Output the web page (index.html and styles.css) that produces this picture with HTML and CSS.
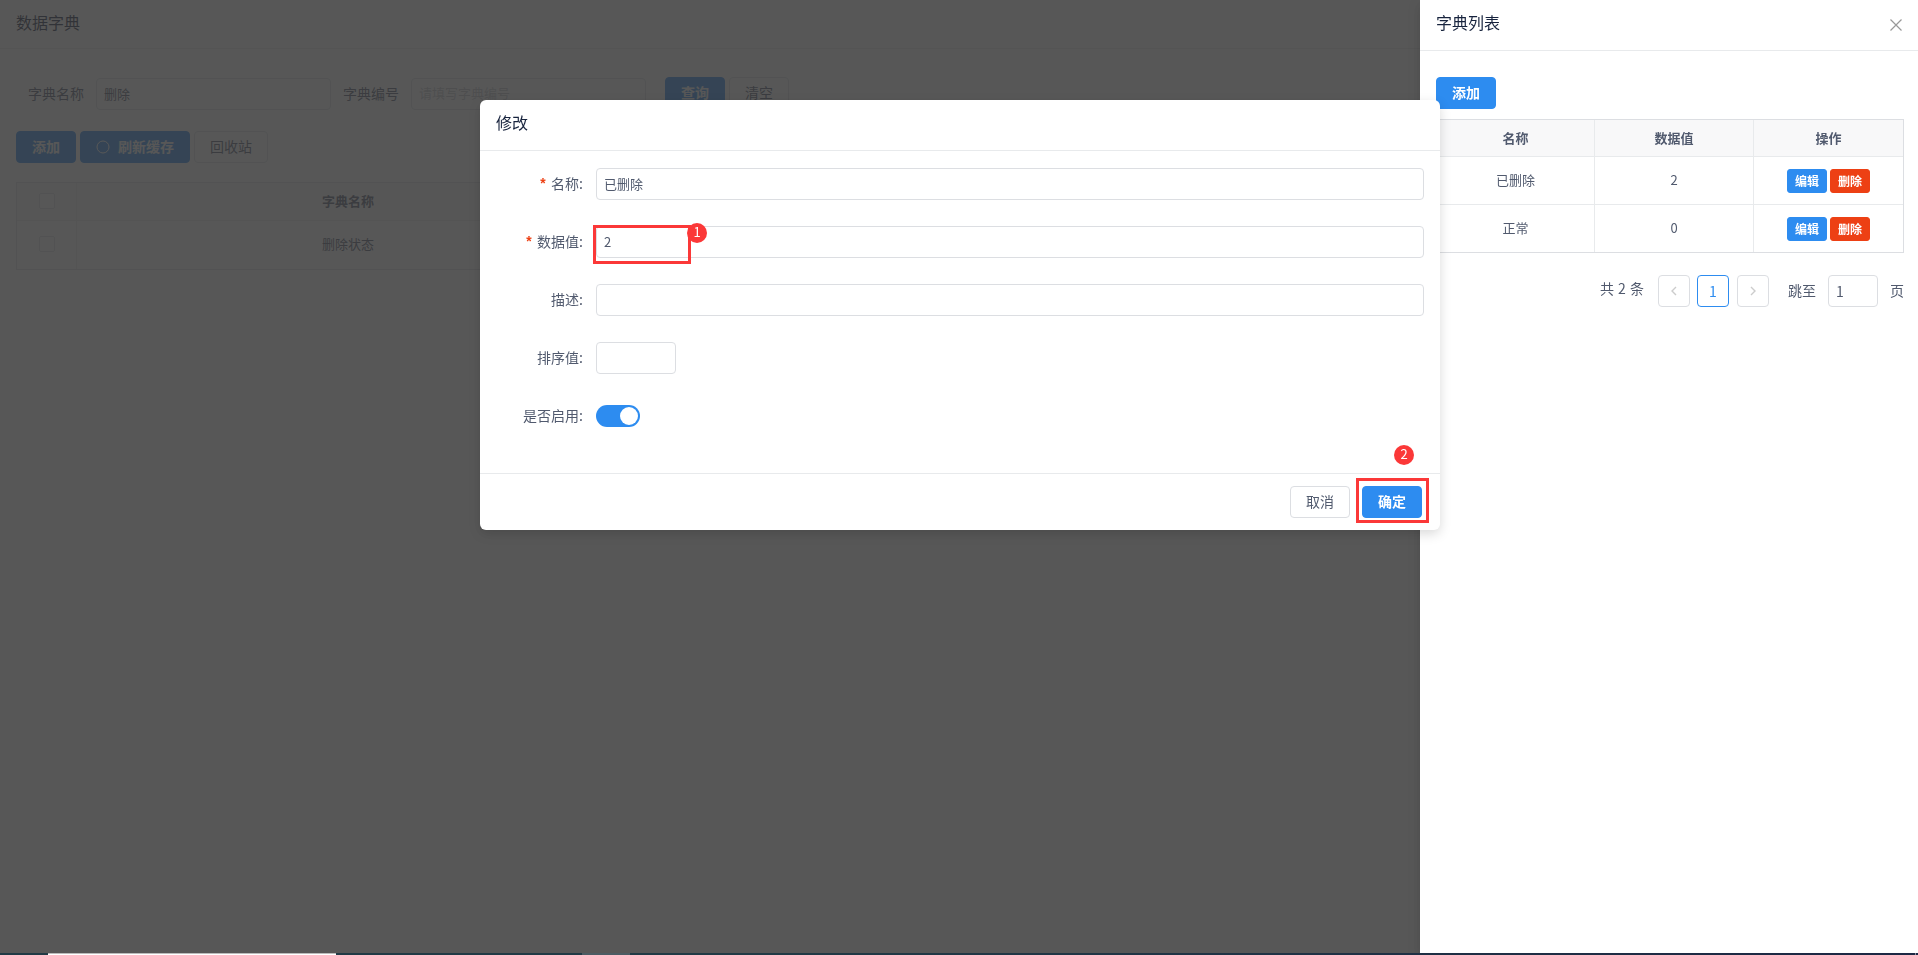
FILE: index.html
```html
<!DOCTYPE html>
<html lang="zh-CN">
<head>
<meta charset="utf-8">
<title>数据字典</title>
<link rel="stylesheet" href="styles.css">
</head>
<body>
<main class="page">
  <h1 class="page-title">数据字典</h1>
  <form class="search">
    <label class="search-label">字典名称</label>
    <div class="field search-field">删除</div>
    <label class="search-label">字典编号</label>
    <div class="field search-field placeholder">请填写字典编号</div>
    <div class="search-actions">
      <button type="button" class="btn primary">查询</button>
      <button type="button" class="btn">清空</button>
    </div>
  </form>
  <div class="toolbar">
    <button type="button" class="btn primary">添加</button>
    <button type="button" class="btn primary with-icon"><svg class="ring" width="14" height="14" viewBox="0 0 14 14"><circle cx="7" cy="7" r="6" fill="none" stroke="currentColor"/></svg><span>刷新缓存</span></button>
    <button type="button" class="btn">回收站</button>
  </div>
  <div class="dict-table">
    <div class="dict-row dict-head"><div class="dict-check"><i class="box"></i></div><div class="dict-name">字典名称</div><div></div></div>
    <div class="dict-row"><div class="dict-check"><i class="box"></i></div><div class="dict-name">删除状态</div><div></div></div>
  </div>
</main>
<div class="mask"></div>
<div class="mask"></div>

<aside class="drawer">
  <header class="panel-head drawer-head">
    <span>字典列表</span>
    <svg class="close" width="14" height="14" viewBox="0 0 14 14"><path d="M1.5 1.5 12.5 12.5M12.5 1.5 1.5 12.5" stroke="#999" stroke-width="1.2" fill="none"/></svg>
  </header>
  <div class="drawer-body">
    <button type="button" class="btn primary">添加</button>
    <div class="value-table">
      <div class="value-row value-head"><div>名称</div><div>数据值</div><div>操作</div></div>
      <div class="value-row"><div>已删除</div><div>2</div><div class="ops"><button type="button" class="btn small primary">编辑</button><button type="button" class="btn small danger">删除</button></div></div>
      <div class="value-row"><div>正常</div><div>0</div><div class="ops"><button type="button" class="btn small primary">编辑</button><button type="button" class="btn small danger">删除</button></div></div>
    </div>
    <nav class="pager">
      <span class="total">共 2 条</span>
      <span class="pager-item"><svg width="8" height="10" viewBox="0 0 8 10"><path d="M6 1 2 5 6 9" stroke="#ccc" stroke-width="1.4" fill="none"/></svg></span>
      <span class="pager-item active">1</span>
      <span class="pager-item next"><svg width="8" height="10" viewBox="0 0 8 10"><path d="M2 1 6 5 2 9" stroke="#ccc" stroke-width="1.4" fill="none"/></svg></span>
      <span class="jump">跳至</span>
      <div class="field jump-field">1</div>
      <span>页</span>
    </nav>
  </div>
</aside>

<section class="modal">
  <header class="panel-head modal-head">修改</header>
  <div class="modal-body">
    <div class="form-item"><label class="form-label required">名称:</label><div class="field grow">已删除</div></div>
    <div class="form-item"><label class="form-label required">数据值:</label><div class="field grow">2</div>
      <i class="mark mark-value"></i><b class="badge badge-value">1</b></div>
    <div class="form-item"><label class="form-label">描述:</label><div class="field grow"></div></div>
    <div class="form-item"><label class="form-label">排序值:</label><div class="field sort"></div></div>
    <div class="form-item"><label class="form-label">是否启用:</label><span class="switch"></span></div>
  </div>
  <footer class="modal-foot">
    <button type="button" class="btn">取消</button>
    <button type="button" class="btn primary">确定</button>
    <i class="mark mark-ok"></i><b class="badge badge-ok">2</b>
  </footer>
</section>

<div class="taskbar"><i class="task current"></i><i class="task other"></i><i class="task edge"></i></div>
</body>
</html>
```

FILE: styles.css
```css
* { box-sizing: border-box; }
html, body { height: 100%; }
body {
  margin: 0;
  overflow: hidden;
  background: #fff;
  color: #515a6e;
  font: 14px/1.5 "Noto Sans CJK SC", "Liberation Sans", sans-serif;
}
i, b { font-style: normal; font-weight: 400; }

.btn {
  height: 32px;
  padding: 0 15px 1px;
  border: 1px solid #dcdee2;
  border-radius: 4px;
  background: #fff;
  color: #515a6e;
  font: inherit;
  line-height: 29px;
  white-space: nowrap;
}
.btn.primary { background: #2d8cf0; border-color: #2d8cf0; color: #fff; font-weight: 700; }
.btn.danger { background: #ed4014; border-color: #ed4014; color: #fff; font-weight: 700; }
.btn.small { height: 24px; padding: 0 7px; border-radius: 3px; font-size: 12px; line-height: 22px; }
.btn.with-icon { display: flex; align-items: center; gap: 8px; padding-bottom: 0; }
.with-icon span { position: relative; top: -1px; }

.field {
  height: 32px;
  padding: 0 7px;
  border: 1px solid #dcdee2;
  border-radius: 4px;
  background: #fff;
  font-size: 13px;
  line-height: 30px;
}
.placeholder { color: #c5c8ce; line-height: 28px; }

/* Dictionary page */
.page-title {
  height: 49px;
  margin: 0;
  padding: 0 16px;
  border-bottom: 1px solid #e8eaec;
  color: #17233d;
  font-size: 16px;
  font-weight: 400;
  line-height: 45px;
}
.search { display: flex; margin: 28px 0 0 28px; height: 54px; align-items: flex-start; }
.search-label { width: 68px; line-height: 33px; }
.search-field { width: 235px; margin: 1px 12px 0 0; }
.search-actions { display: flex; gap: 4px; margin-left: 7px; }
.toolbar { display: flex; gap: 4px; padding-left: 16px; }
.dict-table { margin: 19px 16px 0; border: 1px solid #dcdee2; font-size: 13px; }
.dict-row { display: grid; grid-template-columns: 60px 542px 1fr; height: 48px; }
.dict-head { height: 38px; background: #f8f8f9; border-bottom: 1px solid #e8eaec; font-weight: 700; }
.dict-check, .dict-name { display: flex; align-items: center; justify-content: center; padding-bottom: 2px; }
.dict-check { border-right: 1px solid #e8eaec; }
.dict-head > div { padding-bottom: 1px; }
.box { width: 16px; height: 16px; border: 1px solid #dcdee2; border-radius: 2px; background: #fff; }

.mask { position: fixed; inset: 0; background: rgba(55, 55, 55, .6); }

.panel-head {
  height: 51px;
  padding: 0 16px;
  border-bottom: 1px solid #e8eaec;
  color: #17233d;
  font-size: 16px;
  line-height: 45px;
}
.modal-head { line-height: 44px; }

/* Drawer */
.drawer {
  position: fixed;
  top: 0;
  right: 0;
  bottom: 0;
  width: 498px;
  background: #fff;
  box-shadow: 0 4px 12px rgba(0, 0, 0, .15);
}
.drawer-head { display: flex; justify-content: space-between; padding-right: 15px; }
.close { margin-top: 18px; }
.drawer-body { padding: 26px 14px 0 16px; }
.drawer-body > .btn { display: block; }
.value-table { margin-top: 10px; border: 1px solid #dcdee2; font-size: 13px; }
.value-row { display: grid; grid-template-columns: 158px 159px 1fr; height: 48px; }
.value-row > div { display: flex; align-items: center; justify-content: center; padding-bottom: 2px; border-right: 1px solid #e8eaec; border-bottom: 1px solid #e8eaec; }
.value-row > div:last-child { border-right: 0; }
.value-row > .ops { gap: 3px; padding-bottom: 0; }
.value-row:last-child { height: 47px; }
.value-row:last-child > div { border-bottom: 0; }
.value-head { height: 37px; background: #f8f8f9; font-weight: 700; }
.value-head > div { padding-bottom: 1px; }
.pager { display: flex; justify-content: flex-end; margin-top: 22px; line-height: 31px; }
.total { margin: -2px 14px 0 0; word-spacing: 1px; }
.pager-item {
  display: flex;
  align-items: center;
  justify-content: center;
  width: 32px;
  height: 32px;
  margin-right: 7px;
  border: 1px solid #dcdee2;
  border-radius: 4px;
}
.pager-item.active { margin-right: 8px; border-color: #2d8cf0; color: #2d8cf0; }
.pager-item.next { margin-right: 19px; }
.jump-field { width: 50px; margin: 0 12px; font-size: 14px; }

/* Edit dialog */
.modal {
  position: fixed;
  top: 100px;
  left: 480px;
  width: 960px;
  height: 430px;
  border-radius: 6px;
  background: #fff;
  box-shadow: 0 4px 12px rgba(0, 0, 0, .15);
}
.modal-body { height: 322px; padding: 17px 16px 0; }
.form-item { position: relative; display: flex; height: 32px; margin-bottom: 26px; }
.form-label { width: 100px; padding-right: 13px; text-align: right; line-height: 31px; }
.required::before { content: "*"; margin-right: 4px; color: #ed4014; font: 700 14px "Liberation Mono", monospace; }
.grow { flex: 1; }
.sort { width: 80px; }
.switch { width: 44px; height: 22px; margin-top: 5px; padding: 2px; border-radius: 11px; background: #2d8cf0; }
.switch::after { content: ""; display: block; width: 18px; height: 18px; margin-left: 22px; border-radius: 50%; background: #fff; }
.modal-foot {
  position: relative;
  display: flex;
  justify-content: flex-end;
  gap: 12px;
  padding: 12px 18px 0;
  border-top: 1px solid #e8eaec;
}

/* Numbered callouts */
.mark { position: absolute; border: 3px solid #fb3838; }
.mark-value { left: 97px; top: -1px; width: 98px; height: 39px; }
.mark-ok { right: 11px; top: 4px; width: 73px; height: 45px; }
.badge {
  position: absolute;
  width: 20px;
  height: 20px;
  border-radius: 50%;
  background: #fb3838;
  color: #fff;
  font-size: 13px;
  line-height: 18px;
  text-align: center;
}
.badge-value { left: 191px; top: -3px; }
.badge-ok { right: 26px; top: -29px; }

.taskbar { position: fixed; left: 0; right: 0; bottom: 0; display: flex; height: 2px; background: linear-gradient(90deg, #213a45 40%, #1d2844); }
.task.current { width: 288px; margin-left: 48px; background: #fff; border-top: 1px solid #bbb; }
.task.other { width: 48px; margin-left: 246px; background: #4c5c63; }
.task.edge { width: 1px; margin: 0 2px 0 auto; background: #8a90a0; }
```
